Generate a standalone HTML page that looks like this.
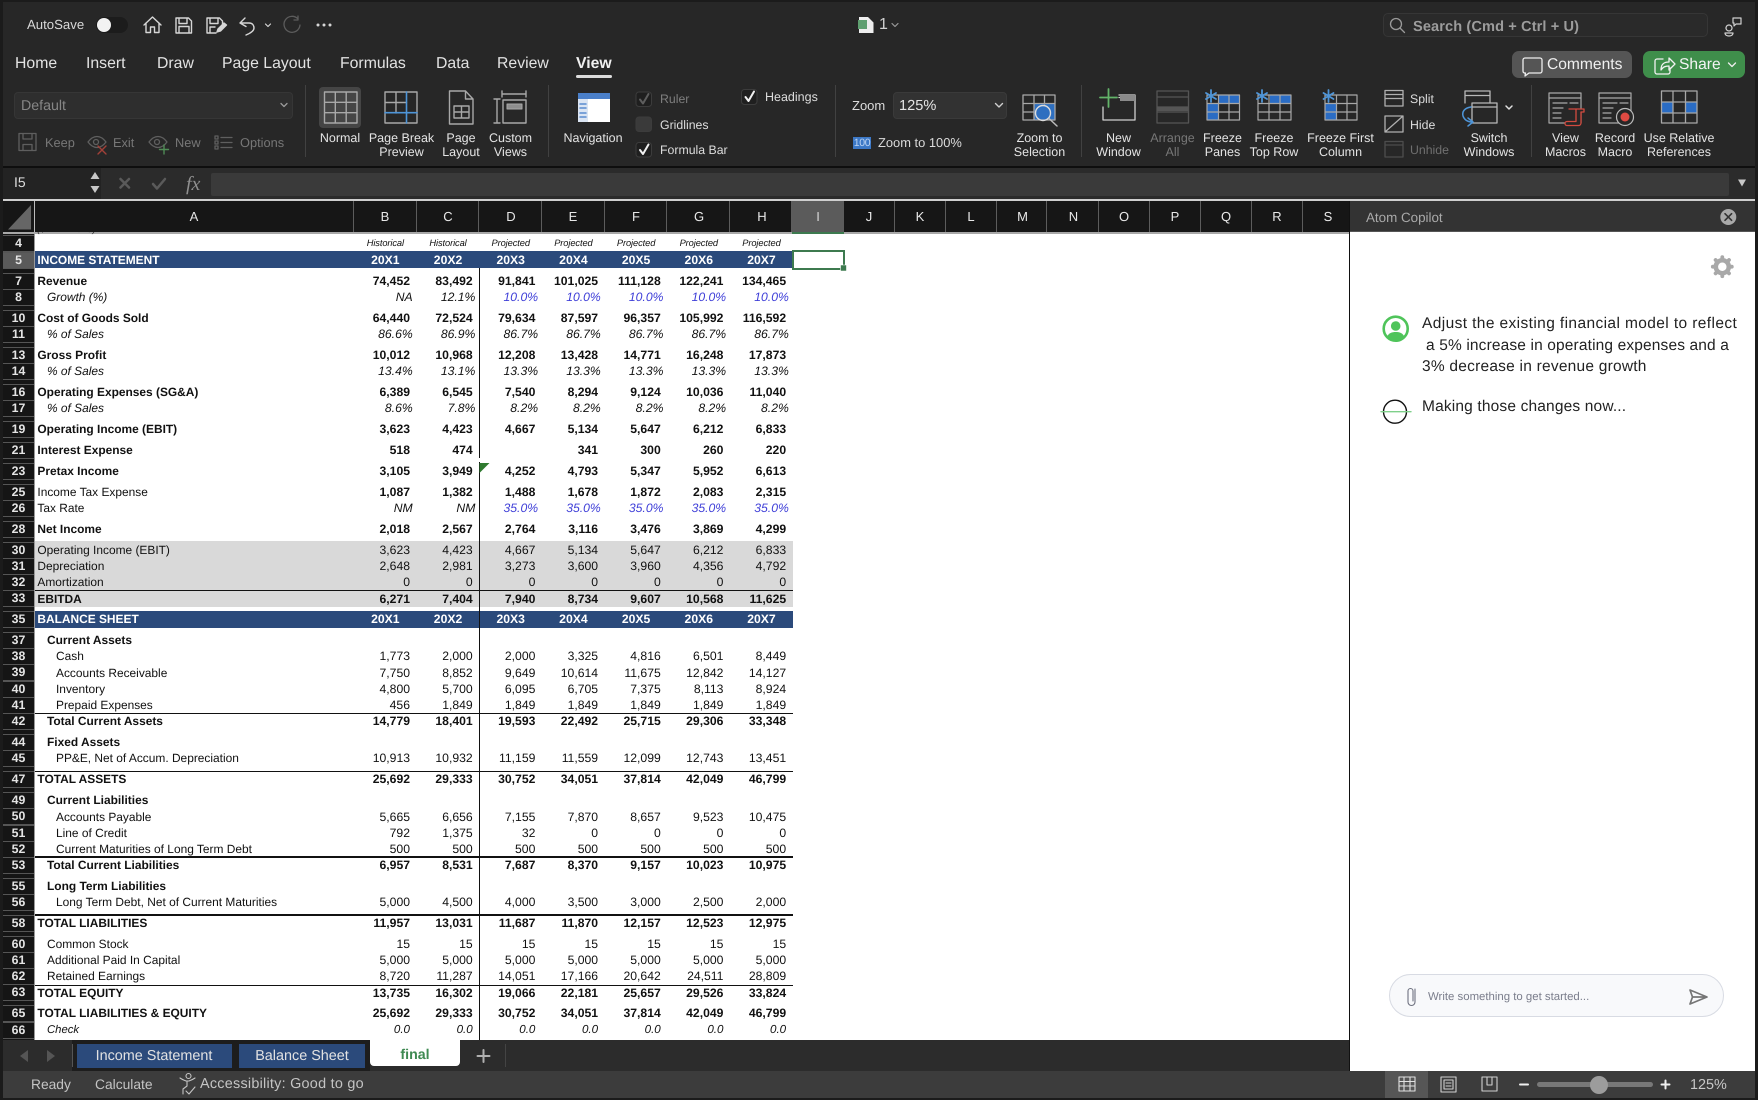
<!DOCTYPE html>
<html><head><meta charset="utf-8"><title>Excel</title>
<style>
*{box-sizing:border-box}
html,body{margin:0;padding:0;width:1758px;height:1100px;overflow:hidden;background:#272727;font-family:"Liberation Sans",sans-serif;text-rendering:geometricPrecision}
.a{position:absolute;white-space:nowrap}
.t{color:#e2e2e2;font-size:15.8px;top:55px;line-height:18px}
.lb{color:#e4e4e4;font-size:12.5px;line-height:14px;text-align:center;transform:translateX(-50%);top:131px}
.d{color:#777}
.s{color:#dcdcdc;font-size:12.3px;line-height:14px}
.sep{width:1px;top:85px;height:72px;background:#414141}
.ch{top:201px;height:31px;background:#161616;color:#e8e8e8;font-size:13px;line-height:32px;text-align:center;border-right:1px solid #5c5c5c}
.r{position:absolute;left:3px;height:16px;display:flex;font-size:12.2px;line-height:16px;color:#111;white-space:nowrap}
.r u{flex:none;display:block;width:31px;margin-top:-.5px;height:17px;border-top:1px solid #555;border-bottom:1px solid #555;background:#151515;color:#e4e4e4;text-decoration:none;text-align:center;font-weight:bold;font-size:12.3px;line-height:15px}
.r s{flex:none;display:block;text-decoration:none;width:320px;padding-left:3.4px;font-size:11.93px}
.r span{flex:none;display:block;width:62.7px;text-align:right;padding-right:6.7px}
.b s,.b span{font-weight:bold}
.n span{font-weight:bold}
.i span{font-style:italic;padding-right:4px}
.i s{font-style:italic}
.r s.l1{padding-left:13px}
.r s.l2{padding-left:22px}
.r span.c{color:#3f3fd8}
.h span{font-size:9.3px;font-style:italic;text-align:center;padding-right:0;letter-spacing:-.1px}
.w s,.w span{color:#fff;font-weight:bold;text-align:center;padding-right:0}
.w s{text-align:left;font-size:11.93px}
.ln{left:35px;width:758px;height:1.5px;background:#111}
.pt{color:#222;font-size:15.5px;line-height:21px;left:1422px}
</style></head>
<body>

<!-- top chrome -->
<div class="a" style="left:0;top:0;width:1758px;height:2px;background:#1b1b1b"></div>
<div class="a" style="left:0;top:0;width:3px;height:1100px;background:#1b1b1b;z-index:5"></div>
<div class="a" style="left:1755px;top:0;width:3px;height:1100px;background:#1b1b1b;z-index:5"></div>
<div class="a" style="left:27px;top:17px;color:#d8d8d8;font-size:13.2px;line-height:16px">AutoSave</div>
<div class="a" style="left:96px;top:17px;width:32px;height:16px;border-radius:8px;background:#1c1c1c"></div>
<div class="a" style="left:97px;top:18px;width:14px;height:14px;border-radius:50%;background:#f2f2f2"></div>
<div class="a" style="left:879px;top:16px;color:#cfcfcf;font-size:16px;line-height:18px">1</div>

<div class="a" style="left:1383px;top:13px;width:325px;height:24px;border:1px solid #363636;border-radius:5px;background:#2a2a2a"></div>
<div class="a" style="left:1413px;top:18px;color:#9c9c9c;font-size:14.6px;font-weight:bold;line-height:18px;letter-spacing:.1px">Search (Cmd + Ctrl + U)</div>

<div class="a t" style="left:15px">Home</div>
<div class="a t" style="left:86px">Insert</div>
<div class="a t" style="left:157px">Draw</div>
<div class="a t" style="left:222px">Page Layout</div>
<div class="a t" style="left:340px">Formulas</div>
<div class="a t" style="left:436px">Data</div>
<div class="a t" style="left:497px">Review</div>
<div class="a t" style="left:576px;font-weight:bold;color:#f0f0f0">View</div>
<div class="a" style="left:576px;top:75px;width:36px;height:3px;border-radius:2px;background:#dcdcdc"></div>

<div class="a" style="left:1512px;top:51px;width:120px;height:27px;border-radius:7px;background:#555"></div>
<div class="a" style="left:1547px;top:56px;color:#f0f0f0;font-size:15.6px;line-height:18px">Comments</div>
<div class="a" style="left:1643px;top:51px;width:102px;height:27px;border-radius:7px;background:#3f8e4b"></div>
<div class="a" style="left:1679px;top:56px;color:#f4f4f4;font-size:15.6px;line-height:18px">Share</div>

<!-- ribbon left -->
<div class="a" style="left:14px;top:92px;width:279px;height:27px;border:1px solid #363636;border-radius:4px;background:#2e2e2e"></div>
<div class="a" style="left:21px;top:97px;color:#868686;font-size:14.2px;line-height:18px">Default</div>
<div class="a d" style="left:45px;top:135px;font-size:12.8px;line-height:15px">Keep</div>
<div class="a d" style="left:113px;top:135px;font-size:12.8px;line-height:15px">Exit</div>
<div class="a d" style="left:175px;top:135px;font-size:12.8px;line-height:15px">New</div>
<div class="a d" style="left:240px;top:135px;font-size:12.8px;line-height:15px">Options</div>
<div class="a sep" style="left:305px"></div>
<div class="a" style="left:319px;top:87px;width:42px;height:41px;border-radius:4px;background:#454545"></div>
<div class="a lb" style="left:340px">Normal</div>
<div class="a lb" style="left:401.5px">Page Break<br>Preview</div>
<div class="a lb" style="left:461px">Page<br>Layout</div>
<div class="a lb" style="left:510.5px">Custom<br>Views</div>
<div class="a sep" style="left:548px"></div>
<div class="a lb" style="left:593px">Navigation</div>
<div class="a s d" style="left:660px;top:92px;color:#7d7d7d">Ruler</div>
<div class="a s" style="left:660px;top:118px">Gridlines</div>
<div class="a s" style="left:660px;top:143px">Formula Bar</div>
<div class="a s" style="left:765px;top:90px;font-size:12.5px">Headings</div>
<div class="a sep" style="left:835px"></div>
<div class="a s" style="left:852px;top:99px;font-size:13px">Zoom</div>
<div class="a" style="left:893px;top:92px;width:114px;height:27px;border:1px solid #3a3a3a;border-radius:4px;background:#323232"></div>
<div class="a" style="left:899px;top:97px;color:#e6e6e6;font-size:14.6px;line-height:18px">125%</div>
<div class="a" style="left:853px;top:137px;width:18px;height:11.5px;background:#3c78c6;color:#bcd4f2;font-size:10.5px;line-height:12px;text-align:center;letter-spacing:-.3px">100</div>
<div class="a s" style="left:878px;top:136px;font-size:12.9px">Zoom to 100%</div>
<div class="a lb" style="left:1039.5px">Zoom to<br>Selection</div>
<div class="a sep" style="left:1081px"></div>
<div class="a lb" style="left:1118.5px">New<br>Window</div>
<div class="a lb" style="left:1172.5px;color:#777">Arrange<br>All</div>
<div class="a lb" style="left:1222.5px">Freeze<br>Panes</div>
<div class="a lb" style="left:1274px">Freeze<br>Top Row</div>
<div class="a lb" style="left:1340.5px">Freeze First<br>Column</div>
<div class="a s" style="left:1410px;top:92px">Split</div>
<div class="a s" style="left:1410px;top:118px">Hide</div>
<div class="a s" style="left:1410px;top:143px;color:#6f6f6f">Unhide</div>
<div class="a lb" style="left:1489px">Switch<br>Windows</div>
<div class="a sep" style="left:1531px"></div>
<div class="a lb" style="left:1565.5px">View<br>Macros</div>
<div class="a lb" style="left:1615px">Record<br>Macro</div>
<div class="a lb" style="left:1679px">Use Relative<br>References</div>

<!-- formula bar -->
<div class="a" style="left:0;top:166px;width:1758px;height:2px;background:#0e0e0e"></div>
<div class="a" style="left:0;top:168px;width:1758px;height:31px;background:#2b2b2b"></div>
<div class="a" style="left:3px;top:168px;width:98px;height:31px;background:#232323"></div>
<div class="a" style="left:14px;top:174px;color:#dcdcdc;font-size:14px;line-height:17px">I5</div>
<div class="a" style="left:211px;top:172.5px;width:1518px;height:23px;border-radius:2px;background:#3a3a3a"></div>
<div class="a" style="left:186px;top:172px;color:#8f8f8f;font-family:'Liberation Serif',serif;font-style:italic;font-size:20px;line-height:24px">fx</div>
<div class="a" style="left:0;top:199px;width:1758px;height:2px;background:#cfcfcf"></div>

<!-- column headers -->
<div class="a" style="left:3px;top:201px;width:1346px;height:31px;background:#161616"></div>
<div class="a" style="left:34px;top:201px;width:1px;height:31px;background:#bbb"></div>
<div class="a ch" style="left:35px;width:319px">A</div>
<div class="a ch" style="left:354px;width:63px">B</div>
<div class="a ch" style="left:417px;width:62px;padding-left:1px">C</div>
<div class="a ch" style="left:479px;width:63px;padding-left:2px">D</div>
<div class="a ch" style="left:542px;width:63px">E</div>
<div class="a ch" style="left:605px;width:62px;padding-left:1px">F</div>
<div class="a ch" style="left:667px;width:63px;padding-left:2px">G</div>
<div class="a ch" style="left:730px;width:62px;padding-left:3px">H</div>
<div class="a ch" style="left:792px;width:52px;background:#5b5b5b;border:0;color:#d8d8d8">I</div>
<div class="a ch" style="left:844px;width:51px">J</div>
<div class="a ch" style="left:895px;width:51px">K</div>
<div class="a ch" style="left:946px;width:51px">L</div>
<div class="a ch" style="left:997px;width:50px;padding-left:2px">M</div>
<div class="a ch" style="left:1047px;width:52px;padding-left:2px">N</div>
<div class="a ch" style="left:1099px;width:51px">O</div>
<div class="a ch" style="left:1150px;width:51px">P</div>
<div class="a ch" style="left:1201px;width:51px">Q</div>
<div class="a ch" style="left:1252px;width:51px">R</div>
<div class="a ch" style="left:1303px;width:46px;border:0;padding-left:4px">S</div>

<!-- sheet -->
<div class="a" style="left:3px;top:232px;width:1346px;height:808px;background:#fff"></div>
<div class="a" style="left:3px;top:232px;width:31px;height:808px;background:#151515"></div>
<div class="a" style="left:34px;top:232px;width:1px;height:808px;background:#999"></div>
<div class="a" style="left:3px;top:232px;width:1346px;height:1.5px;background:#a8a8a8"></div>
<div class="a" style="left:792px;top:232px;width:52px;height:2px;background:#3d7a4f"></div>
<div class="a" style="left:35px;top:251px;width:758px;height:17px;background:#2b4a7b"></div>
<div class="a" style="left:35px;top:611px;width:758px;height:17px;background:#2b4a7b"></div>
<div class="a" style="left:35px;top:541px;width:758px;height:66px;background:#d9d9d9"></div>
<div class="a ln" style="top:589.5px"></div>
<div class="a ln" style="top:712.5px"></div>
<div class="a ln" style="top:770.5px"></div>
<div class="a ln" style="top:856px"></div>
<div class="a ln" style="top:914px"></div>
<div class="a ln" style="top:984.5px"></div>
<div class="a" style="left:478.5px;top:268px;width:1.5px;height:190px;background:#111"></div>
<div class="a" style="left:478.5px;top:462px;width:1.5px;height:578px;background:#111"></div>

<div class="a" style="left:37px;top:232px;height:3px;overflow:hidden;font-size:10px;line-height:10px;color:#333"><div style="margin-top:-7px;font-style:italic">($ in millions)</div></div>

<div class="r h" style="top:235px"><u>4</u><s></s><span>Historical</span><span>Historical</span><span>Projected</span><span>Projected</span><span>Projected</span><span>Projected</span><span>Projected</span></div>
<div class="r w" style="top:252px"><u style="background:#5a5a5a">5</u><s>INCOME STATEMENT</s><span>20X1</span><span>20X2</span><span>20X3</span><span>20X4</span><span>20X5</span><span>20X6</span><span>20X7</span></div>
<div class="r b" style="top:273px"><u>7</u><s>Revenue</s><span>74,452</span><span>83,492</span><span>91,841</span><span>101,025</span><span>111,128</span><span>122,241</span><span>134,465</span></div>
<div class="r i" style="top:289px"><u>8</u><s class="l1">Growth (%)</s><span>NA</span><span>12.1%</span><span class="c">10.0%</span><span class="c">10.0%</span><span class="c">10.0%</span><span class="c">10.0%</span><span class="c">10.0%</span></div>
<div class="r b" style="top:310px"><u>10</u><s>Cost of Goods Sold</s><span>64,440</span><span>72,524</span><span>79,634</span><span>87,597</span><span>96,357</span><span>105,992</span><span>116,592</span></div>
<div class="r i" style="top:326px"><u>11</u><s class="l1">% of Sales</s><span>86.6%</span><span>86.9%</span><span>86.7%</span><span>86.7%</span><span>86.7%</span><span>86.7%</span><span>86.7%</span></div>
<div class="r b" style="top:347px"><u>13</u><s>Gross Profit</s><span>10,012</span><span>10,968</span><span>12,208</span><span>13,428</span><span>14,771</span><span>16,248</span><span>17,873</span></div>
<div class="r i" style="top:363px"><u>14</u><s class="l1">% of Sales</s><span>13.4%</span><span>13.1%</span><span>13.3%</span><span>13.3%</span><span>13.3%</span><span>13.3%</span><span>13.3%</span></div>
<div class="r b" style="top:384px"><u>16</u><s>Operating Expenses (SG&amp;A)</s><span>6,389</span><span>6,545</span><span>7,540</span><span>8,294</span><span>9,124</span><span>10,036</span><span>11,040</span></div>
<div class="r i" style="top:400px"><u>17</u><s class="l1">% of Sales</s><span>8.6%</span><span>7.8%</span><span>8.2%</span><span>8.2%</span><span>8.2%</span><span>8.2%</span><span>8.2%</span></div>
<div class="r b" style="top:421px"><u>19</u><s>Operating Income (EBIT)</s><span>3,623</span><span>4,423</span><span>4,667</span><span>5,134</span><span>5,647</span><span>6,212</span><span>6,833</span></div>
<div class="r b" style="top:442px"><u>21</u><s>Interest Expense</s><span>518</span><span>474</span><span></span><span>341</span><span>300</span><span>260</span><span>220</span></div>
<div class="r b" style="top:463px"><u>23</u><s>Pretax Income</s><span>3,105</span><span>3,949</span><span>4,252</span><span>4,793</span><span>5,347</span><span>5,952</span><span>6,613</span></div>
<div class="r n" style="top:484px"><u>25</u><s>Income Tax Expense</s><span>1,087</span><span>1,382</span><span>1,488</span><span>1,678</span><span>1,872</span><span>2,083</span><span>2,315</span></div>
<div class="r i" style="top:500px"><u>26</u><s style="font-style:normal">Tax Rate</s><span>NM</span><span>NM</span><span class="c">35.0%</span><span class="c">35.0%</span><span class="c">35.0%</span><span class="c">35.0%</span><span class="c">35.0%</span></div>
<div class="r b" style="top:521px"><u>28</u><s>Net Income</s><span>2,018</span><span>2,567</span><span>2,764</span><span>3,116</span><span>3,476</span><span>3,869</span><span>4,299</span></div>
<div class="r" style="top:542px"><u>30</u><s>Operating Income (EBIT)</s><span>3,623</span><span>4,423</span><span>4,667</span><span>5,134</span><span>5,647</span><span>6,212</span><span>6,833</span></div>
<div class="r" style="top:558px"><u>31</u><s>Depreciation</s><span>2,648</span><span>2,981</span><span>3,273</span><span>3,600</span><span>3,960</span><span>4,356</span><span>4,792</span></div>
<div class="r" style="top:574px"><u>32</u><s>Amortization</s><span>0</span><span>0</span><span>0</span><span>0</span><span>0</span><span>0</span><span>0</span></div>
<div class="r b" style="top:590.5px"><u>33</u><s>EBITDA</s><span>6,271</span><span>7,404</span><span>7,940</span><span>8,734</span><span>9,607</span><span>10,568</span><span>11,625</span></div>
<div class="r w" style="top:611px"><u>35</u><s>BALANCE SHEET</s><span>20X1</span><span>20X2</span><span>20X3</span><span>20X4</span><span>20X5</span><span>20X6</span><span>20X7</span></div>
<div class="r b" style="top:632px"><u>37</u><s class="l1">Current Assets</s></div>
<div class="r" style="top:648px"><u>38</u><s class="l2">Cash</s><span>1,773</span><span>2,000</span><span>2,000</span><span>3,325</span><span>4,816</span><span>6,501</span><span>8,449</span></div>
<div class="r" style="top:664.5px"><u>39</u><s class="l2">Accounts Receivable</s><span>7,750</span><span>8,852</span><span>9,649</span><span>10,614</span><span>11,675</span><span>12,842</span><span>14,127</span></div>
<div class="r" style="top:681px"><u>40</u><s class="l2">Inventory</s><span>4,800</span><span>5,700</span><span>6,095</span><span>6,705</span><span>7,375</span><span>8,113</span><span>8,924</span></div>
<div class="r" style="top:697px"><u>41</u><s class="l2">Prepaid Expenses</s><span>456</span><span>1,849</span><span>1,849</span><span>1,849</span><span>1,849</span><span>1,849</span><span>1,849</span></div>
<div class="r b" style="top:713px"><u>42</u><s class="l1">Total Current Assets</s><span>14,779</span><span>18,401</span><span>19,593</span><span>22,492</span><span>25,715</span><span>29,306</span><span>33,348</span></div>
<div class="r b" style="top:734px"><u>44</u><s class="l1">Fixed Assets</s></div>
<div class="r" style="top:750px"><u>45</u><s class="l2">PP&amp;E, Net of Accum. Depreciation</s><span>10,913</span><span>10,932</span><span>11,159</span><span>11,559</span><span>12,099</span><span>12,743</span><span>13,451</span></div>
<div class="r b" style="top:771px"><u>47</u><s>TOTAL ASSETS</s><span>25,692</span><span>29,333</span><span>30,752</span><span>34,051</span><span>37,814</span><span>42,049</span><span>46,799</span></div>
<div class="r b" style="top:792px"><u>49</u><s class="l1">Current Liabilities</s></div>
<div class="r" style="top:808.5px"><u>50</u><s class="l2">Accounts Payable</s><span>5,665</span><span>6,656</span><span>7,155</span><span>7,870</span><span>8,657</span><span>9,523</span><span>10,475</span></div>
<div class="r" style="top:825px"><u>51</u><s class="l2">Line of Credit</s><span>792</span><span>1,375</span><span>32</span><span>0</span><span>0</span><span>0</span><span>0</span></div>
<div class="r" style="top:841px"><u>52</u><s class="l2">Current Maturities of Long Term Debt</s><span>500</span><span>500</span><span>500</span><span>500</span><span>500</span><span>500</span><span>500</span></div>
<div class="r b" style="top:857px"><u>53</u><s class="l1">Total Current Liabilities</s><span>6,957</span><span>8,531</span><span>7,687</span><span>8,370</span><span>9,157</span><span>10,023</span><span>10,975</span></div>
<div class="r b" style="top:878px"><u>55</u><s class="l1">Long Term Liabilities</s></div>
<div class="r" style="top:894px"><u>56</u><s class="l2">Long Term Debt, Net of Current Maturities</s><span>5,000</span><span>4,500</span><span>4,000</span><span>3,500</span><span>3,000</span><span>2,500</span><span>2,000</span></div>
<div class="r b" style="top:915px"><u>58</u><s>TOTAL LIABILITIES</s><span>11,957</span><span>13,031</span><span>11,687</span><span>11,870</span><span>12,157</span><span>12,523</span><span>12,975</span></div>
<div class="r" style="top:936px"><u>60</u><s class="l1">Common Stock</s><span>15</span><span>15</span><span>15</span><span>15</span><span>15</span><span>15</span><span>15</span></div>
<div class="r" style="top:952px"><u>61</u><s class="l1">Additional Paid In Capital</s><span>5,000</span><span>5,000</span><span>5,000</span><span>5,000</span><span>5,000</span><span>5,000</span><span>5,000</span></div>
<div class="r" style="top:968px"><u>62</u><s class="l1">Retained Earnings</s><span>8,720</span><span>11,287</span><span>14,051</span><span>17,166</span><span>20,642</span><span>24,511</span><span>28,809</span></div>
<div class="r b" style="top:984.5px"><u>63</u><s>TOTAL EQUITY</s><span>13,735</span><span>16,302</span><span>19,066</span><span>22,181</span><span>25,657</span><span>29,526</span><span>33,824</span></div>
<div class="r b" style="top:1005px"><u>65</u><s>TOTAL LIABILITIES &amp; EQUITY</s><span>25,692</span><span>29,333</span><span>30,752</span><span>34,051</span><span>37,814</span><span>42,049</span><span>46,799</span></div>
<div class="r i" style="top:1022px"><u>66</u><s class="l1" style="font-size:11.3px">Check</s><span style="padding-right:6.7px;font-size:11.6px">0.0</span><span style="padding-right:6.7px;font-size:11.6px">0.0</span><span style="padding-right:6.7px;font-size:11.6px">0.0</span><span style="padding-right:6.7px;font-size:11.6px">0.0</span><span style="padding-right:6.7px;font-size:11.6px">0.0</span><span style="padding-right:6.7px;font-size:11.6px">0.0</span><span style="padding-right:6.7px;font-size:11.6px">0.0</span></div>

<!-- selected cell -->
<div class="a" style="left:791.5px;top:250px;width:53.5px;height:19.5px;border:2px solid #3d7a4f;background:#fff"></div>

<!-- sheet tabs -->
<div class="a" style="left:3px;top:1040px;width:1346px;height:31px;background:#2c2c2c"></div>
<div class="a" style="left:72px;top:1040px;width:298px;height:31px;background:#1d1d1d"></div>
<div class="a" style="left:76.5px;top:1044px;width:155px;height:24px;background:#2b4a7b;color:#e2e2e2;font-size:14.4px;line-height:25px;text-align:center">Income Statement</div>
<div class="a" style="left:239px;top:1044px;width:126px;height:24px;background:#2b4a7b;color:#e2e2e2;font-size:14.4px;line-height:25px;text-align:center">Balance Sheet</div>
<div class="a" style="left:370px;top:1040px;width:90px;height:26px;background:#fff;border-radius:0 0 4px 4px;color:#3f8a52;font-weight:bold;font-size:14.2px;line-height:31px;text-align:center;overflow:hidden">final</div>
<div class="a" style="left:505px;top:1044px;width:1px;height:23px;background:#444"></div>
<div class="a" style="left:72px;top:1044px;width:1px;height:23px;background:#555"></div>

<!-- status bar -->
<div class="a" style="left:3px;top:1071px;width:1752px;height:27px;background:#3c3c3c"></div>
<div class="a" style="left:0;top:1098px;width:1758px;height:2px;background:#1b1b1b"></div>
<div class="a" style="left:31px;top:1076px;color:#c4c4c4;font-size:13.8px;line-height:17px">Ready</div>
<div class="a" style="left:95px;top:1076px;color:#c4c4c4;font-size:13.8px;line-height:17px">Calculate</div>
<div class="a" style="left:200px;top:1076px;color:#c4c4c4;font-size:14.4px;line-height:17px;letter-spacing:.25px">Accessibility: Good to go</div>
<div class="a" style="left:1385px;top:1071px;width:43px;height:27px;background:#565656"></div>
<div class="a" style="left:1537px;top:1082px;width:116px;height:5px;border-radius:3px;background:#787878"></div>
<div class="a" style="left:1590px;top:1075.5px;width:18px;height:18px;border-radius:50%;background:#9c9c9c"></div>
<div class="a" style="left:1690px;top:1076.5px;color:#c8c8c8;font-size:14.4px;line-height:17px">125%</div>

<!-- copilot panel -->
<div class="a" style="left:1349px;top:201px;width:1px;height:870px;background:#111"></div>
<div class="a" style="left:1350px;top:201px;width:405px;height:870px;background:#fff"></div>
<div class="a" style="left:1350px;top:201px;width:405px;height:31px;background:#333;border-bottom:1px solid #555"></div>
<div class="a" style="left:1366px;top:210px;color:#a9a9a9;font-size:13.4px;line-height:16px">Atom Copilot</div>
<div class="a pt" style="top:313px;letter-spacing:.39px">Adjust the existing financial model to reflect</div>
<div class="a pt" style="top:334.5px;left:1426px;letter-spacing:.14px">a 5% increase in operating expenses and a</div>
<div class="a pt" style="top:355.5px;letter-spacing:.23px">3% decrease in revenue growth</div>
<div class="a pt" style="top:395.5px;letter-spacing:.16px">Making those changes now...</div>
<div class="a" style="left:1389px;top:974px;width:335px;height:43px;border:1px solid #d8dbe3;border-radius:22px;background:#f8f9fb"></div>
<div class="a" style="left:1428px;top:990px;color:#7b7e8c;font-size:11.4px;line-height:14px">Write something to get started...</div>

<!-- icons overlay -->
<svg class="a" width="1758" height="1100" viewBox="0 0 1758 1100" style="left:0;top:0;z-index:3" fill="none" stroke-linecap="round" stroke-linejoin="round">
<!-- title bar -->
<g stroke="#d6d6d6" stroke-width="1.4">
<path d="M144 25l8.5-8 8.500 8M146 23v9.500h4.500v-5.500h4v5.500h4.500V23"/>
<path d="M176 18h12.500l3 3v12h-15.500zM179 18v5.500h8V18M179 33v-6.500h10V33"/>
<path d="M207 18h12.500l3 3v5M207 18v15h9M210 18v5.500h8V18M210 33v-6h5"/>
<path d="M217 32l1-3 6-6 2.500 2-6 6z" fill="#d6d6d6"/>
<path d="M240 23l5-5M240 23l6 3.500M240 23h9c4 0 5 3 5 5 0 3-3 5-8 7"/>
<path d="M265.500 24l2.500 2.500 2.500-2.500" stroke-width="1.200"/>
</g>
<path d="M298 19a8 8 0 1 0 2 6M298 16v4h-4" stroke="#5c5c5c" stroke-width="1.300"/>
<g fill="#d6d6d6"><circle cx="318" cy="25" r="1.500"/><circle cx="324" cy="25" r="1.500"/><circle cx="330" cy="25" r="1.500"/></g>
<path d="M859 17h9l5.500 5.500V33H859z" fill="#eee"/>
<rect x="858" y="20" width="9" height="9" fill="#5f9f70"/>
<path d="M892 23.500l3 3 3-3" stroke="#9a9a9a" stroke-width="1.200"/>
<circle cx="1396" cy="24" r="5.500" stroke="#9a9a9a" stroke-width="1.300"/><path d="M1400 28l4.500 4.500" stroke="#9a9a9a" stroke-width="1.300"/>
<path d="M1729 25a3 3 0 1 0 .01 0zM1725 33c0 4 8 4 8 0zM1733 18h8v6h-5l-2 2v-3h-1z" stroke="#d0d0d0" stroke-width="1.200"/>
<path d="M1525 58h15a2 2 0 0 1 2 2v11a2 2 0 0 1-2 2h-11l-4 3 .5-3a2 2 0 0 1-2.500-2V60a2 2 0 0 1 2-2z" stroke="#eee" stroke-width="1.300"/>
<path d="M1663 59h-6a2 2 0 0 0-2 2v11a2 2 0 0 0 2 2h11a2 2 0 0 0 2-2v-4M1661 70c0-6 3-8 8-8v-4l6 6-6 6v-4c-4 0-6 1-8 4z" stroke="#f2f2f2" stroke-width="1.300"/>
<path d="M1728.500 63l3.500 3.500 3.500-3.500" stroke="#eee" stroke-width="1.300"/>
<!-- left strip -->
<path d="M281 103.500l3 3 3-3" stroke="#9a9a9a" stroke-width="1.300"/>
<g stroke="#5f5f5f" stroke-width="1.300">
<path d="M19 133.500h17v17H19zM23 133.500v5.500h9v-5.500M23 150.500v-6h9v6"/>
<path d="M88 142c3-4 6-5.500 9-5.500s6 1.500 9 5.500c-3 4-6 5.500-9 5.500s-6-1.500-9-5.500z"/><circle cx="96" cy="142" r="2.500"/>
<path d="M149 142c3-4 6-5.500 9-5.500s6 1.500 9 5.500c-3 4-6 5.500-9 5.500s-6-1.500-9-5.500z"/><circle cx="157" cy="142" r="2.500"/>
<path d="M215 136h3v3h-3zM215 141h3v3h-3zM215 146h3v3h-3zM221 137.500h11M221 142.500h11M221 147.500h11"/>
</g>
<path d="M98 146l8 8M106 146l-8 8" stroke="#a24038" stroke-width="1.400"/>
<path d="M164 145v9M159.500 149.500h9" stroke="#4f8a55" stroke-width="1.400"/>
<!-- view group -->
<g stroke="#a8a8a8" stroke-width="1.400">
<path d="M324.500 92h32.500v31h-32.500zM335.300 92v31M346.200 92v31M324.500 102.300h32.500M324.500 112.700h32.500"/>
<path d="M385 92h32v31h-32zM396 92v21M385 102.500h21.500"/>
<path d="M449.500 91h16l7.500 8v25h-23.500zM465.500 91v8h7.500"/>
<path d="M454 106h15v12h-15zM454 112h15M461.500 106v12"/>
<path d="M494 99h6M494 123h6M497 99v24M503 100h23v23h-23zM502 94h24M502 91v6M526 91v6"/>
</g>
<path d="M385 112.700h32M406.500 92v31" stroke="#4e95d8" stroke-width="1.600"/>
<rect x="507" y="104" width="15" height="5" fill="#8e8e8e" stroke="#a8a8a8"/>
<rect x="578" y="93" width="32" height="29" fill="#fff"/>
<rect x="578" y="93" width="32" height="6" fill="#4a7fc9"/>
<rect x="578" y="99" width="10" height="23" fill="#dbe5f3"/>
<path d="M580 104h6M580 108h6M580 113h6M580 117h6" stroke="#5a8cd0" stroke-width="1.500"/>
<!-- checkboxes -->
<g stroke="#3c3c3c" fill="#1f1f1f"><rect x="636" y="92" width="15.500" height="14.500" rx="3"/><rect x="636" y="117" width="15.500" height="14.500" rx="3" fill="#3a3a3a"/><rect x="636" y="142.500" width="15.500" height="14.500" rx="3"/><rect x="741.500" y="89.500" width="15.500" height="15" rx="3"/></g>
<path d="M640 99.500l3 4 5.500-9.500" stroke="#5e5e5e" stroke-width="2"/>
<path d="M640 150l3 4 5.500-9.500" stroke="#f0f0f0" stroke-width="2"/>
<path d="M745.500 97l3 4 5.500-9.500" stroke="#f0f0f0" stroke-width="2"/>
<path d="M995.500 103.500l3.500 3.500 3.500-3.500" stroke="#d0d0d0" stroke-width="1.400"/>
<!-- zoom to selection -->
<rect x="1034" y="104" width="21" height="16" fill="#2e6fc0"/>
<path d="M1023 95h32v25h-32zM1034 95v25M1044.500 95v9M1023 103.500h32M1023 112h11" stroke="#a8a8a8" stroke-width="1.300"/>
<circle cx="1043" cy="113" r="7.500" stroke="#ddd" stroke-width="1.400"/><path d="M1049 118.500l8 7.500" stroke="#bbb" stroke-width="1.500"/>
<!-- new window -->
<path d="M1103 107v13h32V95h-16M1119 97.500h16" stroke="#cfcfcf" stroke-width="1.300"/>
<rect x="1120" y="95" width="15" height="6" fill="#8a8a8a"/>
<path d="M1100 97.500h17M1108.500 89v18" stroke="#63b469" stroke-width="1.800"/>
<!-- arrange -->
<path d="M1157 91h31.500v32H1157zM1157 97h31.500M1157 107h31.500M1157 112h31.500" stroke="#555" stroke-width="1.300"/>
<rect x="1157" y="107" width="31.500" height="4" fill="#555"/>
<!-- freeze -->
<rect x="1219" y="95" width="20.500" height="8.500" fill="#2a6cc4"/><rect x="1207" y="103" width="11.500" height="17" fill="#2a6cc4"/>
<path d="M1207 95h32.500v25H1207zM1218.500 95v25M1229 95v25M1207 103.500h32.500M1207 112h32.500" stroke="#a8a8a8" stroke-width="1.200"/>
<rect x="1270" y="95" width="21" height="8.500" fill="#2a6cc4"/>
<path d="M1258 95h33v25h-33zM1269 95v25M1280 95v25M1258 103.500h33M1258 112h33" stroke="#a8a8a8" stroke-width="1.200"/>
<rect x="1325" y="103" width="11.500" height="17" fill="#2a6cc4"/>
<path d="M1325 95h32v25h-32zM1336.500 95v25M1347 95v25M1325 103.500h32M1325 112h32" stroke="#a8a8a8" stroke-width="1.200"/>
<g stroke="#4e95d8" stroke-width="1.800"><path d="M1211 90v12M1206 93l10 6M1216 93l-10 6"/><path d="M1262 90v12M1257 93l10 6M1267 93l-10 6"/><path d="M1328.500 90v12M1323.500 93l10 6M1333.500 93l-10 6"/></g>
<!-- split hide unhide -->
<g stroke="#b0b0b0" stroke-width="1.300"><path d="M1385 90.500h18v15.500h-18zM1385 94.500h18M1385 98.500h18"/><path d="M1385 116h18v16h-18zM1385 132l18-16"/></g>
<path d="M1385 141.500h18v15.500h-18zM1385 145h18" stroke="#4d4d4d" stroke-width="1.300"/>
<g transform="translate(-1 0)">
<!-- switch windows -->
<path d="M1466 103v-12h25v12M1466 95.500h25" stroke="#b8b8b8" stroke-width="1.300"/>
<path d="M1473 103h25v20h-25zM1473 107h25" stroke="#b8b8b8" stroke-width="1.300"/>
<path d="M1472 107c-7 1-9 5-8 9 1 3 4 6 9 6M1469 118l5 4-5 4" stroke="#4e95d8" stroke-width="1.500"/>
<path d="M1507 106l3 3 3-3" stroke="#e0e0e0" stroke-width="1.500"/>
<!-- macros -->
<path d="M1550 93h32v30h-32zM1550 98h32M1554 103h14M1571 103h8M1554 108h10M1554 113h8M1554 118h8" stroke="#a8a8a8" stroke-width="1.200"/>
<path d="M1570 109h15v3h-3v11a2.500 2.500 0 0 1-2.500 2.500h-11.500a2 2 0 0 1 0-4h9v-12.500z" stroke="#d24a3f" stroke-width="1.300" fill="#272727"/>
<path d="M1600 93h32v30h-32zM1600 98h32M1604 103h14M1621 103h8M1604 108h10M1604 113h8M1604 118h8" stroke="#a8a8a8" stroke-width="1.200"/>
<circle cx="1626" cy="117" r="8.500" stroke="#bbb" stroke-width="1.200" fill="#272727"/><circle cx="1626" cy="117" r="4.500" fill="#e04a42"/>
<rect x="1662.500" y="102" width="11.500" height="11" fill="#2a6cc4"/><rect x="1686.500" y="102" width="11.500" height="11" fill="#2a6cc4"/>
<path d="M1662.500 91h35.500v32h-35.500zM1674 91v32M1686.500 91v32M1662.500 102h35.500M1662.500 113h35.500" stroke="#a8a8a8" stroke-width="1.300"/>
</g>
<!-- formula bar -->
<path d="M90.500 179l4.500-7 4.500 7zM90.500 186l4.500 7 4.500-7z" fill="#c8c8c8"/>
<path d="M120.500 179l8.500 8.500M129 179l-8.500 8.500" stroke="#5a5a5a" stroke-width="2.500"/>
<path d="M153 184l4 4.500 8-9.500" stroke="#5a5a5a" stroke-width="2.500"/>
<path d="M1738 179.500h8l-4 7z" fill="#c8c8c8"/>
<!-- corner -->
<path d="M8 229.500L31 205v24.500z" fill="#666"/>
<!-- sheet marks -->
<path d="M479.500 463h10l-10 10z" fill="#2f7a2f"/>
<rect x="840.500" y="265" width="6" height="6" fill="#3d7a4f" stroke="#fff" stroke-width=".6"/>
<!-- tabs -->
<path d="M28 1050l-8 6 8 6zM47 1050l8 6-8 6z" fill="#555"/>
<path d="M477.500 1056h12M483.500 1050v12" stroke="#b0b0b0" stroke-width="2"/>
<!-- status -->
<path d="M186 1076a2.500 2.500 0 1 1 5 0 2.500 2.500 0 0 1-5 0zM180 1078c3 2 4 2 6 3h3c2-1 3-1 6-3M187 1081v5l-4 3v5M186 1091l3 3 6-7" stroke="#c4c4c4" stroke-width="1.100"/>
<path d="M1399 1077h16v14h-16zM1399 1081.500h16M1399 1086h16M1404 1077v14M1410 1077v14" stroke="#e0e0e0" stroke-width="1.100"/>
<path d="M1441 1077h15v15h-15zM1444 1080h9v9h-9zM1446 1083h5M1446 1086h5" stroke="#d0d0d0" stroke-width="1.100"/>
<path d="M1482 1077h15v14h-15zM1487 1077v8h5v-8" stroke="#d0d0d0" stroke-width="1.100"/>
<path d="M1520 1084.500h8M1661.500 1084.500h8M1665.500 1080.500v8" stroke="#f0f0f0" stroke-width="2"/>
<!-- panel icons -->
<circle cx="1728.300" cy="217" r="8" fill="#a9a9a9"/><path d="M1725 213.700l6.600 6.600M1731.600 213.700l-6.600 6.600" stroke="#333" stroke-width="1.600"/>
<g transform="translate(1722.300 266.700)"><circle r="6.500" stroke="#a8a8a8" stroke-width="4.500"/><g stroke="#a8a8a8" stroke-width="3.800"><path d="M0-9.500v1M0 8.500v1M-9.500 0h1M8.500 0h1M-6.700-6.700l.7.7M6 6l.7.7M6.700-6.700l-.7.7M-6 6l-.7.7"/></g></g>
<circle cx="1395.700" cy="328.700" r="12" stroke="#4fc45a" stroke-width="2.600" fill="#fff"/>
<circle cx="1395.700" cy="326" r="4.800" fill="#4fc45a"/><path d="M1387 337c1.500-4 5-5 8.700-5s7.200 1 8.700 5c-2.500 2-5.500 3-8.700 3s-6.200-1-8.700-3z" fill="#4fc45a"/>
<circle cx="1395" cy="411.700" r="11.500" stroke="#111" stroke-width="1.400"/>
<path d="M1381 411.700h30" stroke="#7fd08a" stroke-width="1.300"/>
<path d="M1414 988.500v13a3.500 3.500 0 0 1-7 0v-11a2.500 2.500 0 0 1 5 0v10" stroke="#6f7280" stroke-width="1.100" transform="translate(1 .5)"/>
<path d="M1690 990l17 7-17 7 2.500-7zM1692.500 997h14" stroke="#757575" stroke-width="1.700"/>
</svg>

</body></html>
